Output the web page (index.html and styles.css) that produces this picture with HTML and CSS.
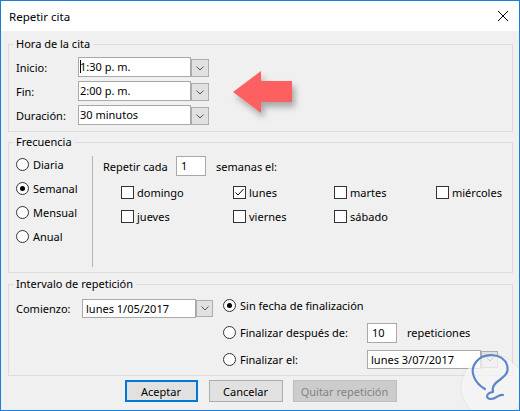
FILE: index.html
```html
<!DOCTYPE html>
<html lang="es">
<head>
<meta charset="utf-8">
<title>Repetir cita</title>
<link rel="stylesheet" href="styles.css">
</head>
<body>
<div class="dialog">
  <div class="titlebar">
    <span class="title">Repetir cita</span>
    <svg class="close" width="10" height="10" viewBox="0 0 10 10"><path d="M0 0L10 10M10 0L0 10" stroke="#000" stroke-width="1" fill="none"/></svg>
  </div>
  <div class="content">
    <fieldset class="group g-hora">
      <legend>Hora de la cita</legend>
      <div class="hora">
        <div class="row"><span class="lbl">Inicio:</span><div class="combo"><div class="field w113"><span class="caret"></span>1:30 p. m.</div><div class="drop"><svg width="8" height="5" viewBox="0 0 8 5"><polyline points="0.5,0.5 4,4 7.5,0.5" fill="none" stroke="#555" stroke-width="1"/></svg></div></div></div>
        <div class="row"><span class="lbl">Fin:</span><div class="combo"><div class="field w113">2:00 p. m.</div><div class="drop"><svg width="8" height="5" viewBox="0 0 8 5"><polyline points="0.5,0.5 4,4 7.5,0.5" fill="none" stroke="#555" stroke-width="1"/></svg></div></div></div>
        <div class="row"><span class="lbl">Duración:</span><div class="combo"><div class="field w113">30 minutos</div><div class="drop"><svg width="8" height="5" viewBox="0 0 8 5"><polyline points="0.5,0.5 4,4 7.5,0.5" fill="none" stroke="#555" stroke-width="1"/></svg></div></div></div>
      </div>
    </fieldset>

    <fieldset class="group g-freq">
      <legend>Frecuencia</legend>
      <div class="freq">
        <div class="freq-left">
          <div class="opt"><span class="radio"></span>Diaria</div>
          <div class="opt"><span class="radio on"></span>Semanal</div>
          <div class="opt"><span class="radio"></span>Mensual</div>
          <div class="opt"><span class="radio"></span>Anual</div>
        </div>
        <div class="sep"></div>
        <div class="freq-right">
          <div class="repeat"><span class="rep-lbl">Repetir cada</span><div class="field w30">1</div><span class="rep-after">semanas el:</span></div>
          <div class="days">
            <div class="chk"><span class="box"></span>domingo</div>
            <div class="chk"><span class="box"><svg width="11" height="11" viewBox="0 0 11 11"><polyline points="1.5,5.5 4,8 9.5,2" fill="none" stroke="#000" stroke-width="1"/></svg></span>lunes</div>
            <div class="chk"><span class="box"></span>martes</div>
            <div class="chk"><span class="box"></span>miércoles</div>
            <div class="chk"><span class="box"></span>jueves</div>
            <div class="chk"><span class="box"></span>viernes</div>
            <div class="chk"><span class="box"></span>sábado</div>
          </div>
        </div>
      </div>
    </fieldset>

    <fieldset class="group g-int">
      <legend>Intervalo de repetición</legend>
      <div class="int">
        <div class="int-left">
          <span class="int-lbl">Comienzo:</span>
          <div class="combo"><div class="field date">lunes 1/05/2017</div><div class="drop small"><svg width="8" height="5" viewBox="0 0 8 5"><polyline points="0.5,0.5 4,4 7.5,0.5" fill="none" stroke="#555" stroke-width="1"/></svg></div></div>
        </div>
        <div class="int-right">
          <div class="opt2"><span class="radio on"></span>Sin fecha de finalización</div>
          <div class="opt2"><span class="olbl"><span class="radio"></span>Finalizar después de:</span><div class="field w30">10</div><span class="rep-after">repeticiones</span></div>
          <div class="opt2"><span class="olbl"><span class="radio"></span>Finalizar el:</span><div class="combo"><div class="field date">lunes 3/07/2017</div><div class="drop small"><svg width="8" height="5" viewBox="0 0 8 5"><polyline points="0.5,0.5 4,4 7.5,0.5" fill="none" stroke="#555" stroke-width="1"/></svg></div></div></div>
        </div>
      </div>
    </fieldset>

    <div class="buttons">
      <div class="btn primary">Aceptar</div>
      <div class="btn cancel">Cancelar</div>
      <div class="btn disabled">Quitar repetición</div>
    </div>
  </div>

  <svg class="arrow" width="80" height="60" viewBox="228 66 80 60">
    <defs><filter id="sh" x="-20%" y="-20%" width="150%" height="160%"><feDropShadow dx="3" dy="5" stdDeviation="3" flood-color="#000" flood-opacity="0.3"/></filter></defs>
    <polygon points="233,92 261,71 261,81 292,81 292,102 261,102 261,113" fill="#fd6161" filter="url(#sh)"/>
  </svg>

  <svg class="mark" width="62" height="64" viewBox="458 348 62 64">
    <defs><filter id="ms" x="-20%" y="-20%" width="140%" height="140%"><feDropShadow dx="0" dy="0" stdDeviation="1.5" flood-color="#000" flood-opacity="0.12"/></filter></defs>
    <circle cx="493" cy="387" r="31" fill="rgba(250,250,250,0.72)" filter="url(#ms)"/>
    <path d="M485 389 C476 384 468 372 476 362 C484 352 503 353 507 365 C510 374 502 378 497 382 C493 385 492 388 493 392 C486 393 485 399 491 399 C497 399 498 394 503 395" fill="none" stroke="#5b87c8" stroke-width="2.2" stroke-linecap="round" stroke-linejoin="round"/>
  </svg>
</div>
</body>
</html>
```
FILE: styles.css
```css
* { box-sizing: border-box; }
html, body { margin: 0; padding: 0; }
body {
  font-family: "Noto Sans", "Open Sans", sans-serif;
  font-size: 11px;
  color: #000;
  background: #fff;
}
.dialog {
  position: relative;
  width: 520px;
  height: 411px;
  border: 1px solid #1c7fd6;
  background: #f0f0f0;
  overflow: hidden;
}
.titlebar {
  height: 30px;
  background: #fff;
  display: flex;
  align-items: center;
  padding: 0 11px 0 8px;
}
.title { flex: 1; font-size: 11.5px; }
.close { display: block; }

.content { padding: 0 6px 0 7px; }

.group {
  margin: 0;
  padding: 0;
  border: 1px solid #dcdcdc;
  min-width: 0;
}
.group legend {
  padding: 0 3px;
  margin-left: 4px;
  line-height: 16px;
}
.g-hora { margin-top: 5px; position: relative; }
.g-freq { margin-top: 2px; }
.g-int { margin-top: 3px; }

/* Hora */
.hora {
  display: flex;
  flex-direction: column;
  gap: 4px;
  padding: 5px 0 6px 7px;
}
.row { display: flex; align-items: center; height: 20px; }
.lbl { width: 62px; }
.combo { display: flex; align-items: flex-end; }
.field {
  background: #fff;
  border: 1px solid #a9a9a9;
  height: 20px;
  line-height: 18px;
  padding-left: 1px;
  white-space: nowrap;
}
.w113 { width: 113px; }
.w30 { width: 30px; padding-left: 4px; }
.date { width: 114px; height: 19px; line-height: 17px; padding-left: 3px; }
.drop {
  width: 18px;
  height: 18px;
  background: #e1e1e1;
  border: 1px solid #adadad;
  display: flex;
  align-items: center;
  justify-content: center;
}
.drop.small { width: 17px; height: 17px; margin-bottom: 1px; }
.drop svg { display: block; }
.caret {
  display: inline-block;
  width: 0;
  height: 13px;
  border-left: 1px solid #000;
  vertical-align: -2px;
  margin-right: -1px;
}

/* Frecuencia */
.freq { display: flex; height: 122px; }
.freq-left {
  width: 83px;
  padding: 2px 0 0 7px;
  display: flex;
  flex-direction: column;
}
.opt { display: flex; align-items: center; height: 24px; gap: 4px; }
.radio {
  width: 13px;
  height: 13px;
  border-radius: 50%;
  border: 1px solid #333;
  background: #fff;
  flex: none;
  position: relative;
}
.radio.on::after {
  content: "";
  position: absolute;
  left: 3px;
  top: 3px;
  width: 5px;
  height: 5px;
  border-radius: 50%;
  background: #000;
}
.sep { width: 1px; background: #b4b4b4; margin: 6px 0 5px; }
.freq-right { padding: 6px 0 0 10px; flex: 1; }
.repeat { display: flex; align-items: center; height: 20px; }
.rep-lbl { width: 73px; }
.rep-after { margin-left: 10px; }
.days {
  display: grid;
  grid-template-columns: 112px 101px 102px auto;
  grid-auto-rows: 24px;
  margin: 4px 0 0 18px;
}
.chk { display: flex; align-items: center; gap: 3px; }
.box {
  width: 13px;
  height: 13px;
  border: 1px solid #333;
  background: #fff;
  flex: none;
}
.box svg { display: block; }

/* Intervalo */
.int { display: flex; height: 83px; }
.int-left {
  width: 214px;
  display: flex;
  align-items: center;
  height: 19px;
  margin-top: 7px;
  padding-left: 7px;
}
.int-lbl { width: 66px; }
.int-right { display: flex; flex-direction: column; }
.opt2 { display: flex; align-items: center; height: 27px; gap: 4px; }
.olbl { display: flex; align-items: center; gap: 4px; width: 140px; }
.opt2 .rep-after { margin-left: 6px; }

/* Buttons */
.buttons {
  display: flex;
  justify-content: center;
  margin-top: 4px;
}
.btn {
  height: 22px;
  display: flex;
  align-items: center;
  justify-content: center;
  background: #e1e1e1;
  border: 1px solid #adadad;
}
.primary { width: 73px; border: 2px solid #0078d7; }
.cancel { width: 74px; margin: 0 10px 0 11px; }
.disabled { width: 104px; background: #cccccc; border-color: #bfbfbf; color: #838383; }

/* overlays */
.arrow { position: absolute; left: 227px; top: 65px; }
.mark { position: absolute; left: 457px; top: 347px; }
```
